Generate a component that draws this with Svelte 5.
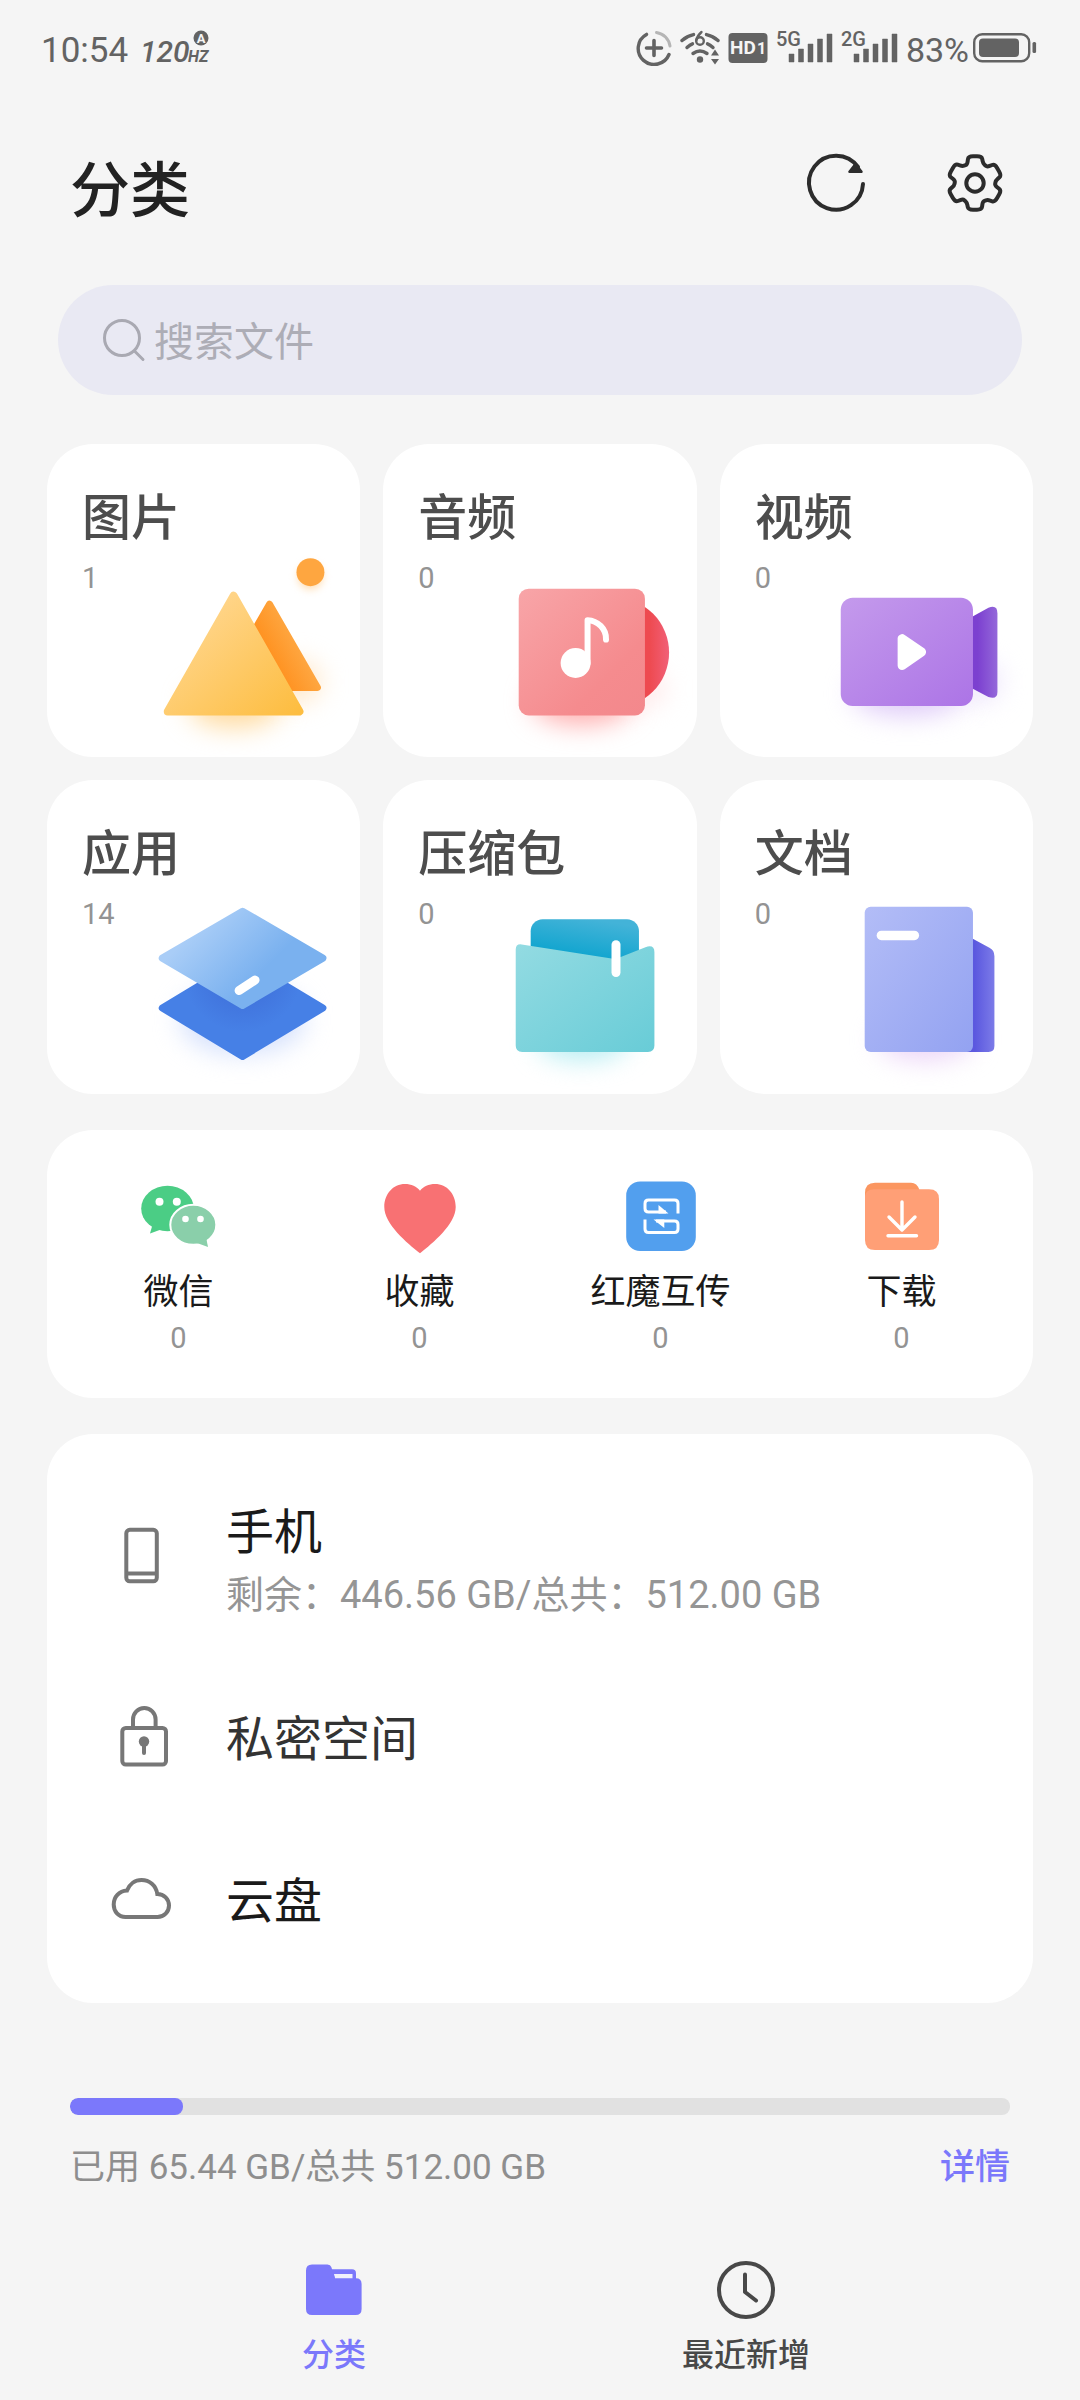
<script>
    let query = $state("");
    let activeTab = $state("category");

    const categories = [
        { id: "image", name: "图片", count: 1 },
        { id: "audio", name: "音频", count: 0 },
        { id: "video", name: "视频", count: 0 },
        { id: "apps", name: "应用", count: 14 },
        { id: "archive", name: "压缩包", count: 0 },
        { id: "docs", name: "文档", count: 0 }
    ];

    const shortcuts = [
        { id: "wechat", name: "微信", count: 0 },
        { id: "favorite", name: "收藏", count: 0 },
        { id: "transfer", name: "红魔互传", count: 0 },
        { id: "download", name: "下载", count: 0 }
    ];

    const places = [
        { id: "phone", name: "手机", detail: "剩余：446.56 GB/总共：512.00 GB" },
        { id: "private", name: "私密空间" },
        { id: "cloud", name: "云盘" }
    ];

    const networks = ["5G", "2G"];
    const usedPercent = 12;

    // six-tooth gear outline, corners rounded through their neighbours
    function gearPath(cx, cy) {
        const points = [];
        for (let i = 0; i < 6; i++) {
            const base = -90 + i * 60;
            for (const [r, a] of [[27.5, -14], [27.5, 14], [21, 23], [20, 37]]) {
                const rad = ((base + a) * Math.PI) / 180;
                points.push([cx + r * Math.cos(rad), cy + r * Math.sin(rad)]);
            }
        }
        const at = (p, q, t) => `${(p[0] + (q[0] - p[0]) * t).toFixed(2)} ${(p[1] + (q[1] - p[1]) * t).toFixed(2)}`;
        let d = "";
        points.forEach((p, i) => {
            const prev = points[(i + points.length - 1) % points.length];
            const next = points[(i + 1) % points.length];
            d += `${i === 0 ? "M" : "L"}${at(p, prev, 0.35)} Q${p[0].toFixed(2)} ${p[1].toFixed(2)} ${at(p, next, 0.35)} `;
        });
        return d + "Z";
    }
</script>

<div class="screen" lang="zh-CN">
    <div class="status">
        <span class="time">10:54</span>
        <svg class="rate" width="72" height="40" viewBox="0 0 72 40">
            <text x="0" y="34" class="rate-num">120</text>
            <text x="48" y="34" class="rate-unit">HZ</text>
            <circle cx="61" cy="10" r="7.5" fill="#636363" />
            <text x="61" y="15" class="rate-auto">A</text>
        </svg>
        <div class="status-right">
            <svg width="36" height="36" viewBox="0 0 36 36" fill="none" stroke-width="3.4" stroke-linecap="round">
                <path d="M10.5 4.4A16 16 0 1 0 33 24.5" stroke="#636363" />
                <path d="M20.5 2.4A16 16 0 0 1 34 16" stroke="#b5b5b5" stroke-width="3" />
                <path d="M18 10.5V25.5M10.5 18H25.5" stroke="#636363" stroke-width="3.6" />
            </svg>
            <svg width="40" height="36" viewBox="0 0 40 36" fill="none" stroke="#636363" stroke-width="3.4" stroke-linecap="round">
                <path d="M2 10.5Q7 6 13.5 4.6M26.5 4.6Q33 6 38 10.5" />
                <path d="M7 17.5Q10 14.7 12.5 13.8M27.5 13.8Q30 14.7 33 17.5" />
                <path d="M13 23.5Q20 18.5 27 23.5" />
                <path d="M21.5 2Q17 6 16.2 10.5" stroke-width="2.4" />
                <circle cx="20" cy="11" r="3.8" stroke-width="2.4" />
                <circle cx="20" cy="29.500" r="3.2" fill="#636363" stroke="none" />
                <path d="M35 19.500l4 6h-8zM35 34.500l-4-5.500h8z" fill="#636363" stroke="none" />
            </svg>
            <svg width="40" height="32" viewBox="0 0 40 32">
                <rect x="0.5" y="1" width="39" height="30" rx="4" fill="#636363" />
                <text x="2" y="22" class="hd">HD</text>
                <text x="29" y="22" class="hd-one">1</text>
            </svg>
            {#each networks as network}
                <svg width="57" height="44" viewBox="0 -4 57 44">
                    <text x="0" y="16" class="net">{network}</text>
                    <path d="M13 24h5V32h-5zM22.500 19h5v13h-5zM32 14h5V32h-5zM41.500 9h5v23h-5zM51 4h5v28h-5z" fill="#636363" stroke="#636363" stroke-width="0.5" stroke-linejoin="round" />
                </svg>
            {/each}
            <span class="percent">83%</span>
            <svg width="64" height="32" viewBox="0 0 64 32">
                <rect x="1.2" y="2.2" width="55" height="27" rx="8" fill="none" stroke="#636363" stroke-width="2.4" />
                <rect x="6" y="6.5" width="40" height="18.5" rx="4" fill="#636363" />
                <rect x="59.5" y="10" width="3.6" height="11" rx="1.5" fill="#636363" />
            </svg>
        </div>
    </div>

    <header>
        <h1>分类</h1>
        <button class="icon-btn" aria-label="刷新">
            <svg width="64" height="64" viewBox="0 0 64 64">
                <path d="M59 33A27 27 0 1 1 54 16" fill="none" stroke="#2c2c2c" stroke-width="4" stroke-linecap="round" />
                <path d="M45.500 20.800L51.500 13L57.500 20.800Z" fill="#2c2c2c" stroke="#2c2c2c" stroke-width="2.500" stroke-linejoin="round" />
            </svg>
        </button>
        <button class="icon-btn" aria-label="设置">
            <svg width="64" height="64" viewBox="0 0 64 64" fill="none" stroke="#2c2c2c" stroke-width="4" stroke-linejoin="round">
                <path d={gearPath(32, 32)} />
                <circle cx="32" cy="32" r="8.7" />
            </svg>
        </button>
    </header>

    <label class="search">
        <svg width="44" height="44" viewBox="0 0 44 44" fill="none" stroke="#a9a9b2" stroke-width="3" stroke-linecap="round">
            <circle cx="20" cy="20" r="17.5" />
            <path d="M32.500 33L41 41.500" />
        </svg>
        <input type="text" placeholder="搜索文件" aria-label="搜索文件" bind:value={query} />
    </label>

    <main>
        <section class="grid">
            {#each categories as item}
                <button class="card">
                    <svg class="art" viewBox="0 0 314 314" aria-hidden="true">
                        {#if item.id === "image"}
                            <defs>
                                <linearGradient id="img-a" x1="0" y1="0" x2="1" y2="1">
                                    <stop offset="0.2" stop-color="#ffd58a" />
                                    <stop offset="1" stop-color="#fdbd40" />
                                </linearGradient>
                                <linearGradient id="img-b" gradientUnits="userSpaceOnUse" x1="224" y1="222" x2="254" y2="206">
                                    <stop offset="0" stop-color="#ff8f1c" />
                                    <stop offset="1" stop-color="#fea640" />
                                </linearGradient>
                            </defs>
                            <ellipse class="shade" cx="188" cy="262" rx="46" ry="22" fill="#ffdba0" />
                            <ellipse class="shade" cx="250" cy="238" rx="24" ry="20" fill="#ffe6c5" />
                            <circle class="shade-small" cx="264" cy="133" r="12" fill="#ffd9a8" />
                            <path d="M223 160.500L271 244H175Z" fill="url(#img-b)" stroke="url(#img-b)" stroke-width="7" stroke-linejoin="round" />
                            <path d="M187 152L253 268H121Z" fill="url(#img-a)" stroke="url(#img-a)" stroke-width="8" stroke-linejoin="round" />
                            <circle cx="264" cy="128.500" r="14" fill="#fea640" />
                        {:else if item.id === "audio"}
                            <defs>
                                <linearGradient id="aud-a" x1="0" y1="0" x2="1" y2="1">
                                    <stop offset="0" stop-color="#f8a5a8" />
                                    <stop offset="0.7" stop-color="#f58b8e" />
                                    <stop offset="1" stop-color="#f3888c" />
                                </linearGradient>
                                <linearGradient id="aud-b" gradientUnits="userSpaceOnUse" x1="262" y1="0" x2="287" y2="0">
                                    <stop offset="0.2" stop-color="#ee4a50" />
                                    <stop offset="1" stop-color="#f16078" />
                                </linearGradient>
                            </defs>
                            <ellipse class="shade" cx="199" cy="258" rx="50" ry="23" fill="#ffaeae" />
                            <ellipse class="shade" cx="262" cy="245" rx="20" ry="16" fill="#ffe6e6" />
                            <circle cx="231.5" cy="209" r="55.2" fill="url(#aud-b)" />
                            <rect x="136" y="145" width="126.5" height="127" rx="10" fill="url(#aud-a)" />
                            <circle cx="193" cy="219.5" r="15" fill="#fff" />
                            <path d="M205 220V176.500C215 177 224 185 223.500 196" fill="none" stroke="#fff" stroke-width="6" stroke-linecap="round" stroke-linejoin="round" />
                        {:else if item.id === "video"}
                            <defs>
                                <linearGradient id="vid-a" x1="0" y1="0" x2="1" y2="1">
                                    <stop offset="0" stop-color="#c49aec" />
                                    <stop offset="1" stop-color="#ac74e6" />
                                </linearGradient>
                                <linearGradient id="vid-b" gradientUnits="userSpaceOnUse" x1="253" y1="0" x2="278" y2="0">
                                    <stop offset="0.2" stop-color="#7c40d0" />
                                    <stop offset="1" stop-color="#9468da" />
                                </linearGradient>
                            </defs>
                            <ellipse class="shade" cx="188" cy="250" rx="56" ry="22" fill="#decaf8" />
                            <ellipse class="shade" cx="262" cy="238" rx="18" ry="20" fill="#ebe2fb" />
                            <path d="M250 174.500L269 164Q278 160.500 278 169.500V248.500Q278 256.500 269 253.500L250 243.500Z" fill="url(#vid-b)" />
                            <rect x="121" y="154" width="132.5" height="108.5" rx="12" fill="url(#vid-a)" />
                            <path d="M182.500 195V222L202 208.500Z" fill="#fff" stroke="#fff" stroke-width="9" stroke-linejoin="round" />
                        {:else if item.id === "apps"}
                            <defs>
                                <linearGradient id="app-a" x1="0" y1="0.2" x2="1" y2="0.8">
                                    <stop offset="0.15" stop-color="#a9cdf7" />
                                    <stop offset="0.65" stop-color="#7ab1ef" />
                                </linearGradient>
                                <radialGradient id="app-b" gradientUnits="userSpaceOnUse" cx="196" cy="192" r="60">
                                    <stop offset="0.3" stop-color="#3f70da" />
                                    <stop offset="1" stop-color="#4680e6" />
                                </radialGradient>
                            </defs>
                            <ellipse class="shade" cx="196" cy="240" rx="62" ry="34" fill="#d3dffc" />
                            <path d="M196 180L276.500 228.500L196 277L115.500 228.500Z" fill="url(#app-b)" stroke="url(#app-b)" stroke-width="7" stroke-linejoin="round" />
                            <path d="M196 131.500L276.500 178.500L196 226L115.500 178.500Z" fill="url(#app-a)" stroke="url(#app-a)" stroke-width="7" stroke-linejoin="round" />
                            <path d="M192.500 211L208.500 200.500" stroke="#fff" stroke-width="9" stroke-linecap="round" />
                        {:else if item.id === "archive"}
                            <defs>
                                <linearGradient id="arc-a" x1="0" y1="0" x2="1" y2="1">
                                    <stop offset="0" stop-color="#93dbe2" />
                                    <stop offset="1" stop-color="#68ccd7" />
                                </linearGradient>
                                <linearGradient id="arc-b" gradientUnits="userSpaceOnUse" x1="206" y1="139" x2="200" y2="176">
                                    <stop offset="0" stop-color="#43b3d8" />
                                    <stop offset="1" stop-color="#12a5cf" />
                                </linearGradient>
                            </defs>
                            <ellipse class="shade" cx="200" cy="260" rx="46" ry="20" fill="#b5edf2" />
                            <rect x="148" y="139.5" width="108.5" height="60" rx="12" fill="url(#arc-b)" />
                            <path d="M133 170Q133 164 139 164.800L229 179Q233 179.700 237 178L263 167.500Q272 164.500 272 172.500V266Q272 272.500 265.500 272.500H139.500Q133 272.500 133 266Z" fill="url(#arc-a)" />
                            <rect x="229" y="160.5" width="9" height="37" rx="4.5" fill="#fff" />
                        {:else}
                            <defs>
                                <linearGradient id="doc-a" x1="0" y1="0" x2="1" y2="1">
                                    <stop offset="0" stop-color="#b3bdf7" />
                                    <stop offset="1" stop-color="#93a2f1" />
                                </linearGradient>
                                <linearGradient id="doc-b" gradientUnits="userSpaceOnUse" x1="253" y1="0" x2="275" y2="0">
                                    <stop offset="0.1" stop-color="#5b58df" />
                                    <stop offset="1" stop-color="#7c7be8" />
                                </linearGradient>
                            </defs>
                            <ellipse class="shade" cx="206" cy="260" rx="48" ry="20" fill="#ebd3f7" />
                            <path d="M245 154.500L270 168Q275 170.500 275 176.500V266.500Q275 272.500 269 272.500H245Z" fill="url(#doc-b)" />
                            <rect x="145" y="127" width="108.5" height="145.5" rx="6" fill="url(#doc-a)" />
                            <rect x="157" y="151" width="42.5" height="9.5" rx="4.75" fill="#fff" />
                        {/if}
                    </svg>
                    <span class="card-text">
                        <span class="card-name">{item.name}</span>
                        <span class="count">{item.count}</span>
                    </span>
                </button>
            {/each}
        </section>

        <section class="shortcuts">
            {#each shortcuts as item}
                <button class="shortcut">
                    <svg width="80" height="80" viewBox="0 0 80 80" aria-hidden="true">
                        {#if item.id === "wechat"}
                            <path d="M14 47L11 57.500L22 53.500Z" fill="#4bcd85" />
                            <ellipse cx="28.5" cy="32.5" rx="26.3" ry="22.8" fill="#4bcd85" />
                            <circle cx="20.5" cy="25.7" r="4" fill="#fff" />
                            <circle cx="37.8" cy="25.7" r="4" fill="#fff" />
                            <ellipse cx="54.3" cy="48.8" rx="23" ry="20" fill="#8acfaa" stroke="#fff" stroke-width="2" />
                            <path d="M58 67L69 71L67 61Z" fill="#8acfaa" />
                            <circle cx="46.5" cy="43" r="3.3" fill="#fff" />
                            <circle cx="61.5" cy="43" r="3.3" fill="#fff" />
                        {:else if item.id === "favorite"}
                            <path d="M40 77.300C27 67 4.300 48 4.300 31C4.300 18 13 8 25 8C31 8 37 10.500 40 14.700C43 10.500 49 8 55 8C67 8 75.700 18 75.700 31C75.700 48 53 67 40 77.300Z" fill="#f87173" />
                        {:else if item.id === "transfer"}
                            <rect x="5.2" y="5.5" width="69.6" height="69.6" rx="14" fill="#529fee" />
                            <g fill="none" stroke="#fff" stroke-width="3">
                                <path d="M57 37.500V27.500Q57 24 53.500 24H27.500Q24 24 24 27.500V32.500Q24 36 27.500 36H45" />
                                <path d="M24 43.500V53Q24 56.500 27.500 56.500H53.500Q57 56.500 57 53V48.500Q57 45 53.500 45H35" />
                            </g>
                            <path d="M37.500 29L47.500 37.500H37.500ZM32.500 43.500H43.300V52Z" fill="#fff" />
                        {:else}
                            <path d="M3 17Q3 6.700 13 6.700H49Q55 6.700 57.500 14V24H3Z" fill="#fb9660" />
                            <path d="M3 20Q4 13.300 12 13.300H67Q77 13.300 77 23V64Q77 74 67 74H13Q3 74 3 64Z" fill="#ff9f76" />
                            <path d="M40 26V53M27 41L40 54L53 41M26 59.700H54.500" fill="none" stroke="#fff" stroke-width="3.4" stroke-linecap="round" stroke-linejoin="round" />
                        {/if}
                    </svg>
                    <span class="shortcut-name">{item.name}</span>
                    <span class="count">{item.count}</span>
                </button>
            {/each}
        </section>

        <section class="places">
            {#each places as place}
                <button class="place" class:tall={place.detail}>
                    <svg width="64" height="64" viewBox="0 0 64 64" fill="none" stroke="#777" stroke-width="4" aria-hidden="true">
                        {#if place.id === "phone"}
                            <rect x="16.3" y="4.8" width="30.5" height="51.5" rx="3.5" />
                            <path d="M16 48.500H47" />
                        {:else if place.id === "private"}
                            <rect x="12.3" y="22" width="43.7" height="36.5" rx="3.5" />
                            <path d="M23 22V13.500A11.300 11.500 0 0 1 45.600 13.500V22" />
                            <circle cx="34" cy="35.5" r="5.2" fill="#777" stroke="none" />
                            <path d="M34 36V47" stroke-linecap="round" />
                        {:else}
                            <path d="M15.500 49C8.500 49 3.700 43.500 3.700 36.500C3.700 29 9 23 17 22.500C19.500 16 25 12 31.500 12C39.500 12 46 17.500 47.300 26C54 26 59 31 59 37.500C59 44 54 49 47.500 49Z" />
                        {/if}
                    </svg>
                    <span class="place-text">
                        <span class="place-name" class:soft={place.id === "private"}>{place.name}</span>
                        {#if place.detail}
                            <span class="place-detail">{place.detail}</span>
                        {/if}
                    </span>
                </button>
            {/each}
        </section>

        <section class="usage">
            <div class="bar" role="progressbar" aria-label="已用" aria-valuenow={usedPercent} aria-valuemin="0" aria-valuemax="100">
                <div class="bar-fill" style="width: {usedPercent}%"></div>
            </div>
            <div class="usage-row">
                <span>已用 65.44 GB/总共 512.00 GB</span>
                <a href="#detail">详情</a>
            </div>
        </section>
    </main>

    <nav>
        <button class="tab" class:active={activeTab === "category"} onclick={() => (activeTab = "category")}>
            <svg width="64" height="64" viewBox="0 0 64 64" aria-hidden="true">
                <path d="M28 11.300H50Q54 11.300 54 15.300V24H28Z" fill="currentColor" />
                <path d="M32 16H50.500V21H33Z" fill="#f0f0fb" />
                <path d="M10 6.500H25.500Q28.500 6.500 29.300 9L33 20.300H54Q59.600 20.300 59.600 26V51Q59.600 57 53.600 57H10Q4 57 4 51V12.500Q4 6.500 10 6.500Z" fill="currentColor" />
            </svg>
            <span>分类</span>
        </button>
        <button class="tab" class:active={activeTab === "recent"} onclick={() => (activeTab = "recent")}>
            <svg width="64" height="64" viewBox="0 0 64 64" fill="none" stroke="currentColor" stroke-width="4" stroke-linecap="round" stroke-linejoin="round" aria-hidden="true">
                <circle cx="32" cy="32" r="27" />
                <path d="M31 16.500V34L42 42.500" />
            </svg>
            <span>最近新增</span>
        </button>
    </nav>
</div>

<style>
    :global(body) {
        margin: 0;
        background: #f5f5f5;
    }

    .screen {
        background: #f5f5f5;
        font-family: Roboto, "Noto Sans CJK SC", sans-serif;
        color: #1a1a1a;
    }

    svg {
        display: block;
        flex: none;
    }

    button {
        margin: 0;
        padding: 0;
        border: 0;
        background: none;
        font: inherit;
        color: inherit;
        text-align: left;
        cursor: pointer;
    }

    .status {
        display: flex;
        align-items: center;
        height: 96px;
        padding: 0 43px 0 41px;
        color: #636363;
    }

    .time {
        padding-top: 5px;
        font-size: 35px;
        line-height: 40px;
    }

    .rate {
        margin-left: 12px;
    }

    .rate text,
    .status-right text {
        font-family: Roboto, sans-serif;
        fill: #636363;
    }

    .rate .rate-num {
        font-size: 30px;
        font-style: italic;
        font-weight: 500;
    }

    .rate .rate-unit {
        font-size: 16px;
        font-style: italic;
        font-weight: 700;
    }

    .rate .rate-auto {
        font-size: 13px;
        font-weight: 700;
        text-anchor: middle;
        fill: #f5f5f5;
    }

    .status-right {
        display: flex;
        align-items: center;
        gap: 8px;
        margin-left: auto;
    }

    .status-right .hd {
        font-size: 19px;
        font-weight: 700;
        fill: #f5f5f5;
    }

    .status-right .hd-one {
        font-size: 16px;
        font-weight: 700;
        fill: #f5f5f5;
    }

    .status-right .net {
        font-size: 20px;
        font-weight: 500;
    }

    .percent {
        margin-right: -4px;
        padding-top: 4px;
        font-size: 34px;
        line-height: 40px;
    }

    header {
        display: flex;
        align-items: center;
        gap: 75px;
        height: 174px;
        padding: 0 73px 0 70px;
    }

    h1 {
        flex: 1;
        margin: 0;
        padding-top: 18px;
        font-size: 60px;
        line-height: 80px;
        font-weight: 500;
        color: #222;
    }

    .search {
        display: flex;
        align-items: center;
        gap: 8px;
        height: 110px;
        margin: 15px 58px 49px;
        padding: 0 44px;
        box-sizing: border-box;
        border-radius: 55px;
        background: #e9e9f3;
    }

    .search input {
        flex: 1;
        min-width: 0;
        padding: 6px 0 0;
        border: 0;
        outline: 0;
        background: none;
        font: inherit;
        font-size: 40px;
        line-height: 60px;
        color: #333;
    }

    .search input::placeholder {
        color: #adadb6;
        opacity: 1;
    }

    main {
        padding: 0 47px;
    }

    .grid {
        display: grid;
        grid-template-columns: repeat(3, 1fr);
        gap: 23px;
    }

    .card {
        display: grid;
        border-radius: 46px;
        background: #fff;
        overflow: hidden;
    }

    .art {
        grid-area: 1 / 1;
        width: 100%;
        height: auto;
    }

    .shade {
        filter: blur(13px);
    }

    .shade-small {
        filter: blur(4px);
    }

    .card-text {
        grid-area: 1 / 1;
        display: flex;
        flex-direction: column;
        gap: 7px;
        padding: 43px 35px 40px;
    }

    .card-name {
        font-size: 49px;
        line-height: 64px;
        font-weight: 500;
        color: #4d4d4d;
    }

    .count {
        font-size: 29px;
        line-height: 40px;
        color: #939393;
    }

    .shortcuts {
        display: grid;
        grid-template-columns: repeat(4, 1fr);
        margin-top: 36px;
        padding: 46px 11px 40px;
        border-radius: 46px;
        background: #fff;
    }

    .shortcut {
        display: flex;
        flex-direction: column;
        align-items: center;
    }

    .shortcut-name {
        margin-top: 12px;
        font-size: 35px;
        line-height: 50px;
        white-space: nowrap;
    }

    .places {
        margin-top: 36px;
        padding: 24px 0 22px;
        border-radius: 46px;
        background: #fff;
    }

    .place {
        display: flex;
        align-items: center;
        gap: 52px;
        width: 100%;
        min-height: 162px;
        padding: 0 63px;
    }

    .place.tall {
        min-height: 199px;
    }

    .place-text {
        display: flex;
        flex-direction: column;
        gap: 10px;
        padding-top: 5px;
    }

    .place-name {
        font-size: 48px;
        line-height: 60px;
    }

    .place-name.soft {
        color: #333;
    }

    .place-detail {
        font-size: 38px;
        line-height: 44px;
        color: #959595;
    }

    .usage {
        padding: 95px 23px 0;
    }

    .bar {
        height: 17px;
        border-radius: 8px;
        background: #e1e1e1;
        overflow: hidden;
    }

    .bar-fill {
        height: 100%;
        border-radius: 8px;
        background: #7b78fb;
    }

    .usage-row {
        display: flex;
        justify-content: space-between;
        margin-top: 29px;
        font-size: 35px;
        line-height: 48px;
        color: #8e8e8e;
    }

    .usage-row a {
        font-weight: 500;
        color: #7b78fb;
        text-decoration: none;
    }

    nav {
        display: grid;
        grid-template-columns: repeat(2, 1fr);
        padding: 66px 128px 25px;
    }

    .tab {
        display: flex;
        flex-direction: column;
        align-items: center;
        gap: 13px;
        font-size: 32px;
        line-height: 40px;
        font-weight: 500;
        color: #484848;
    }

    .tab.active {
        color: #7b78fb;
    }
</style>
